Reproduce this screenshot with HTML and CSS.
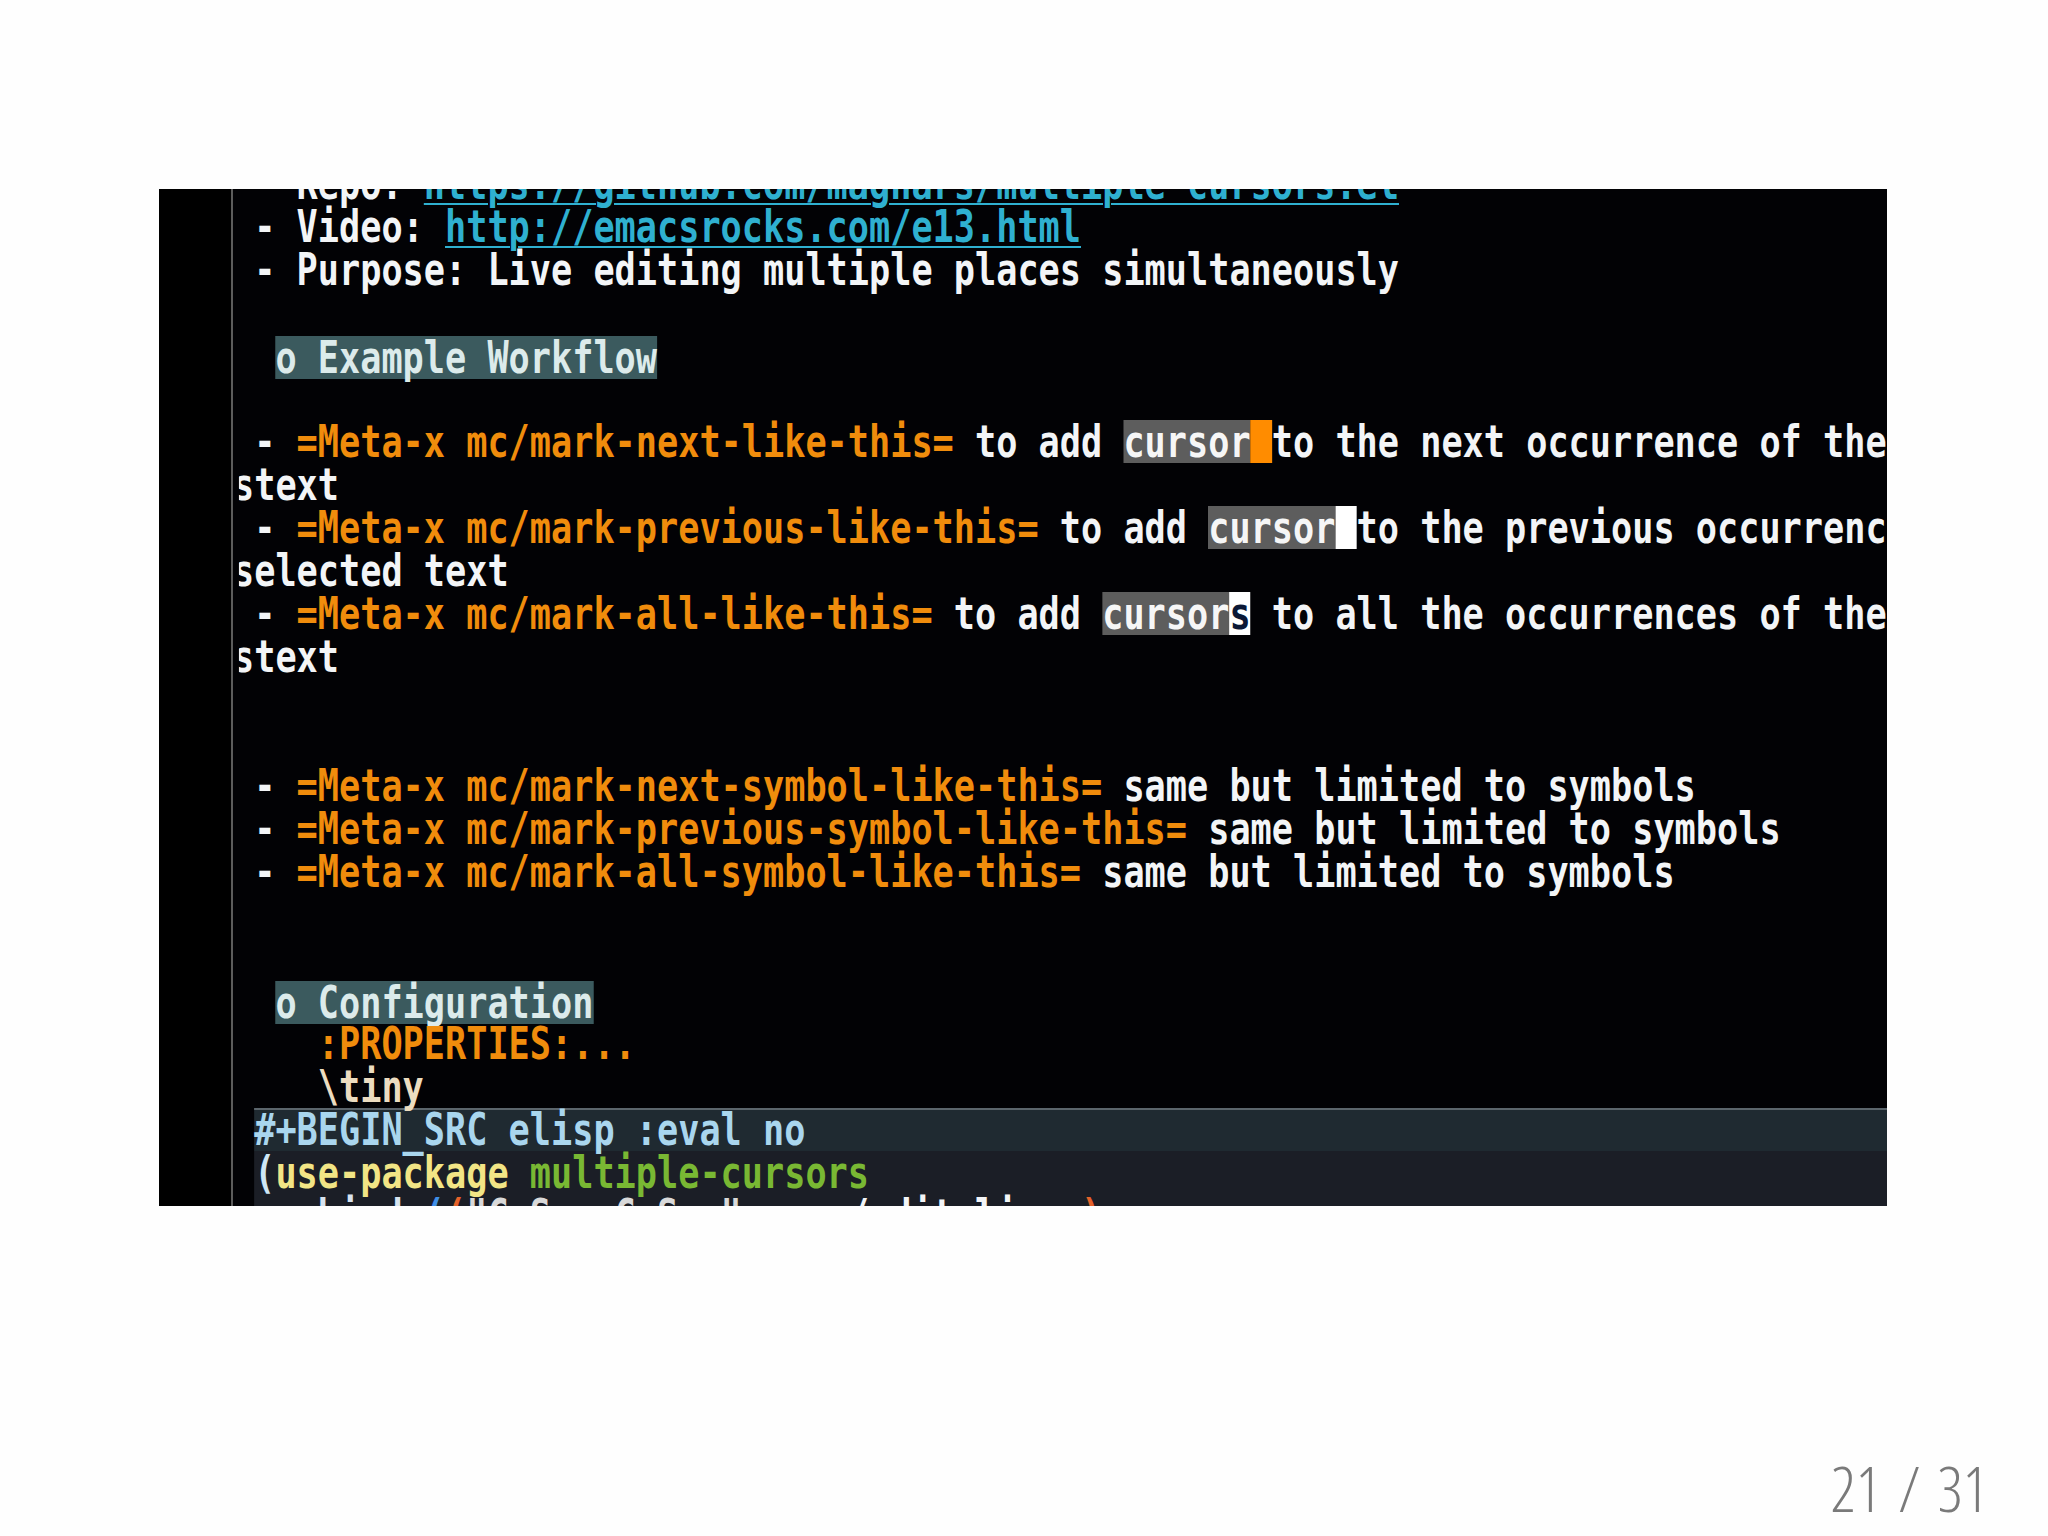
FILE: index.html
```html
<!DOCTYPE html>
<html lang="en">
<head>
<meta charset="utf-8">
<title>Slide 21</title>
<link rel="stylesheet" href="styles.css">
</head>
<body>
<div class="slide">
  <div class="terminal">
    <div class="gutter"></div>
    <div class="divider"></div>
    <div class="buffer">
      <div class="lines">
        <div class="line"> - Repo: <span class="link">https://github.com/magnars/multiple-cursors.el</span></div>
        <div class="line"> - Video: <span class="link">http://emacsrocks.com/e13.html</span></div>
        <div class="line"> - Purpose: Live editing multiple places simultaneously</div>
        <div class="line"></div>
        <div class="line">  <span class="heading">o Example Workflow</span></div>
        <div class="line"></div>
        <div class="line"> - <span class="verb">=Meta-x mc/mark-next-like-this=</span> to add <span class="region">cursor</span><span class="cur cur-orange"> </span>to the next occurrence of the selected</div>
        <div class="line"><span class="wrap">s</span>text</div>
        <div class="line"> - <span class="verb">=Meta-x mc/mark-previous-like-this=</span> to add <span class="region">cursor</span><span class="cur cur-white"> </span>to the previous occurrence of the</div>
        <div class="line"><span class="wrap">s</span>elected text</div>
        <div class="line"> - <span class="verb">=Meta-x mc/mark-all-like-this=</span> to add <span class="region">cursor</span><span class="cur cur-white">s</span> to all the occurrences of the selected</div>
        <div class="line"><span class="wrap">s</span>text</div>
        <div class="line"></div>
        <div class="line"></div>
        <div class="line"> - <span class="verb">=Meta-x mc/mark-next-symbol-like-this=</span> same but limited to symbols</div>
        <div class="line"> - <span class="verb">=Meta-x mc/mark-previous-symbol-like-this=</span> same but limited to symbols</div>
        <div class="line"> - <span class="verb">=Meta-x mc/mark-all-symbol-like-this=</span> same but limited to symbols</div>
        <div class="line"></div>
        <div class="line"></div>
        <div class="line">  <span class="heading">o Configuration</span></div>
        <div class="line">    <span class="verb">:PROPERTIES:...</span></div>
        <div class="line">    <span class="latex">\tiny</span></div>
        <div class="line src-begin"><span class="meta">#+BEGIN_SRC elisp :eval no</span></div>
        <div class="line src-body"><span class="paren">(</span><span class="kw">use-package</span> <span class="pkg">multiple-cursors</span></div>
        <div class="line src-body">  <span class="key">:bind</span> <span class="p1">(</span><span class="p2">(</span><span class="str">"C-S-c C-S-c"</span> . mc/edit-lines<span class="p2">)</span></div>
      </div>
    </div>
  </div>
  <div class="pagenum">21 / 31</div>
</div>
</body>
</html>
```

FILE: styles.css
```css
* {
  box-sizing: border-box;
}

html,
body {
  margin: 0;
  padding: 0;
}

body {
  width: 2048px;
  height: 1536px;
  overflow: hidden;
  background: #fefefe;
  font-family: "DejaVu Sans", sans-serif;
}

.slide {
  display: flex;
  flex-direction: column;
  height: 1536px;
  padding: 189px 0 0 159px;
}

.terminal {
  display: flex;
  width: 1728px;
  height: 1017px;
  flex: none;
  overflow: hidden;
  background: #020205;
}

.gutter {
  width: 72px;
  flex: none;
  background: #000000;
}

.divider {
  width: 2px;
  flex: none;
  background: #5c5c5c;
}

.buffer {
  flex: 1;
  min-width: 0;
}

.lines {
  width: 2120px;
  margin-top: -27.5px;
  transform: scaleX(0.7825);
  transform-origin: 0 0;
  font-family: "DejaVu Sans Mono", monospace;
  font-weight: bold;
  font-size: 45px;
  line-height: 43px;
  color: #f3f5f7;
}

.line {
  height: 43px;
  white-space: pre;
}

.wrap {
  display: inline-block;
  width: 1ch;
  height: 43px;
  vertical-align: top;
  clip-path: inset(0 0 0 28%);
}

.link {
  color: #2fb0d0;
  text-decoration: underline;
  text-decoration-thickness: 2px;
  text-underline-offset: 4px;
}

.heading {
  display: inline-block;
  height: 43px;
  vertical-align: top;
  margin-top: 2px;
  background: #3b5a5e;
  color: #dcebeb;
}

.verb {
  color: #f08c0c;
}

.region,
.cur {
  display: inline-block;
  height: 43px;
  vertical-align: top;
}

.region {
  background: #5d5d5d;
  color: #f6f6f6;
}

.cur-orange {
  background: #ff8c00;
}

.cur-white {
  background: #ffffff;
  color: #0b1836;
}

.latex {
  color: #ecdcc0;
}

.src-begin {
  margin-left: 1ch;
  background: #1f2a31;
  box-shadow: inset 0 2px 0 #5b656c;
}

.src-body {
  margin-left: 1ch;
  background: #1b1e26;
}

.meta {
  color: #a9d6ee;
}

.paren {
  color: #cfe6f5;
}

.kw {
  color: #f2e585;
}

.pkg {
  color: #79b833;
}

.key {
  color: #d8e4f0;
}

.p1 {
  color: #3f8fe8;
}

.p2 {
  color: #e5622a;
}

.str {
  color: #d9d9d9;
}

.pagenum {
  align-self: flex-end;
  margin: 251px 60px 0 0;
  font-family: "Open Sans", "Liberation Sans", sans-serif;
  font-weight: 300;
  font-stretch: 87.5%;
  font-size: 62px;
  line-height: 62px;
  word-spacing: 6px;
  color: #7a7a7a;
}
```
